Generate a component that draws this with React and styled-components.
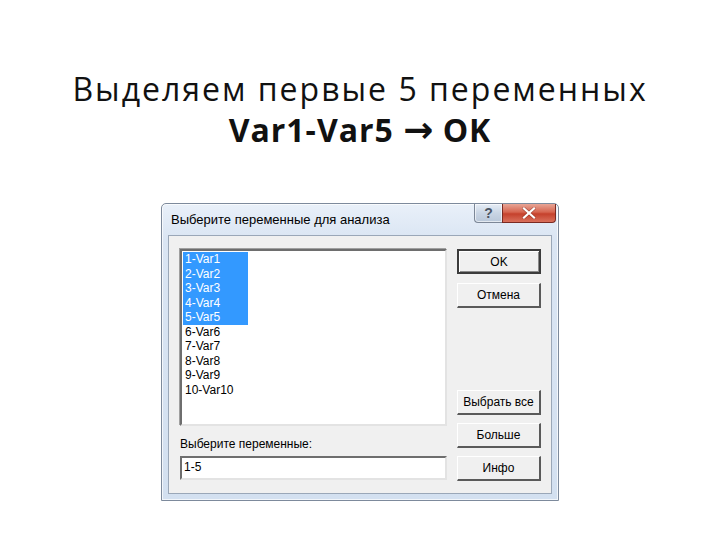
import styled, { createGlobalStyle } from 'styled-components';

const Global = createGlobalStyle`
  html, body {
    margin: 0;
    padding: 0;
    background: #ffffff;
  }
`;

const items = ['1-Var1', '2-Var2', '3-Var3', '4-Var4', '5-Var5', '6-Var6', '7-Var7', '8-Var8', '9-Var9', '10-Var10'];

const App = () => (
  <Slide>
    <Global />
    <Heading>
      <Line>Выделяем первые 5 переменных</Line>
      <Line bold>Var1-Var5 <Arrow>→</Arrow> OK</Line>
    </Heading>

    <Window>
      <TitleBar>
        <Caption>Выберите переменные для анализа</Caption>
        <CaptionButtons>
          <HelpButton>?</HelpButton>
          <CloseButton>
            <svg width="14" height="12" viewBox="0 0 14 12">
              <path d="M2 1.5 L12 10.5 M12 1.5 L2 10.5" stroke="#6b1a12" strokeWidth="3.4" strokeLinecap="square" opacity="0.45" />
              <path d="M2 1.5 L12 10.5 M12 1.5 L2 10.5" stroke="#ffffff" strokeWidth="2.2" strokeLinecap="square" />
            </svg>
          </CloseButton>
        </CaptionButtons>
      </TitleBar>

      <Client>
        <LeftColumn>
          <ListBox>
            {items.map((name, i) => (
              <Item key={name} selected={i < 5}>{name}</Item>
            ))}
          </ListBox>
          <Label>Выберите переменные:</Label>
          <TextBox>1-5</TextBox>
        </LeftColumn>

        <ButtonColumn>
          <Button primary>OK</Button>
          <Button>Отмена</Button>
          <Spacer />
          <Button>Выбрать все</Button>
          <Button>Больше</Button>
          <Button>Инфо</Button>
        </ButtonColumn>
      </Client>
    </Window>
  </Slide>
);

export default App;

const Slide = styled.div`
  width: 720px;
  height: 540px;
  display: flex;
  flex-direction: column;
  align-items: center;
  background: #ffffff;
  overflow: hidden;
`;

const Heading = styled.div`
  margin-top: 68px;
  display: flex;
  flex-direction: column;
  align-items: center;
  font-family: "Open Sans", "Noto Sans", sans-serif;
  color: #111;
`;

const Line = styled.div`
  height: 41px;
  font-size: 32px;
  line-height: 41px;
  letter-spacing: ${p => (p.bold ? '1px' : '2px')};
  font-weight: ${p => (p.bold ? 700 : 400)};
  white-space: nowrap;
`;

const Arrow = styled.span`
  display: inline-block;
  font-family: "DejaVu Sans", sans-serif;
  font-weight: 700;
  font-size: 36px;
  line-height: 30px;
  letter-spacing: 0;
`;

const Window = styled.div`
  margin-top: 53px;
  width: 398px;
  height: 298px;
  box-sizing: border-box;
  border: 1px solid #7d8a9c;
  border-radius: 5px 5px 0 0;
  background: linear-gradient(180deg, #e9f0f9 0%, #dae5f3 12%, #d3e0f0 100%);
  box-shadow: inset 0 0 0 1px rgba(255, 255, 255, 0.7);
  display: flex;
  flex-direction: column;
  padding: 0 6px 6px 6px;
  font-family: "Liberation Sans", Arial, sans-serif;
`;

const TitleBar = styled.div`
  height: 31px;
  display: flex;
  align-items: flex-start;
  justify-content: space-between;
`;

const Caption = styled.div`
  padding: 8px 0 0 3px;
  font-size: 13px;
  color: #000;
  white-space: nowrap;
`;

const CaptionButtons = styled.div`
  display: flex;
  margin-right: -4px;
`;

const HelpButton = styled.div`
  width: 28px;
  height: 19px;
  box-sizing: border-box;
  border: 1px solid #7c8797;
  border-top: none;
  border-right: none;
  border-radius: 0 0 0 4px;
  background: linear-gradient(180deg, #e6edf6 0%, #c9d5e4 50%, #b9c7d9 100%);
  box-shadow: inset 0 0 0 1px rgba(255, 255, 255, 0.6);
  display: flex;
  align-items: center;
  justify-content: center;
  font-size: 14px;
  font-weight: 700;
  color: #4b5563;
`;

const CloseButton = styled.div`
  width: 54px;
  height: 19px;
  box-sizing: border-box;
  border: 1px solid #7a2a22;
  border-top: none;
  border-radius: 0 0 4px 0;
  background: linear-gradient(180deg, #e8a596 0%, #d66550 45%, #c5412c 55%, #d9705c 100%);
  display: flex;
  align-items: center;
  justify-content: center;
`;

const Client = styled.div`
  flex: 1;
  box-sizing: border-box;
  border: 1px solid #9aa7b8;
  background: #f0f0f0;
  display: grid;
  grid-template-columns: 267px 84px;
  column-gap: 10px;
  padding: 13px 10px 12px 11px;
`;

const LeftColumn = styled.div`
  display: flex;
  flex-direction: column;
`;

const ListBox = styled.div`
  height: 177px;
  box-sizing: border-box;
  background: #ffffff;
  border-top: 2px solid #6e6e6e;
  border-left: 2px solid #6e6e6e;
  border-right: 2px solid #e3e3e3;
  border-bottom: 2px solid #e3e3e3;
  box-shadow: -1px -1px 0 #a0a0a0;
  padding: 1px 0 0 1px;
  display: flex;
  flex-direction: column;
  font-size: 12px;
`;

const Item = styled.div`
  width: 65px;
  height: 14.5px;
  line-height: 14.5px;
  padding-left: 2px;
  box-sizing: border-box;
  white-space: nowrap;
  background: ${p => (p.selected ? '#3399ff' : 'transparent')};
  color: ${p => (p.selected ? '#ffffff' : '#000000')};
`;

const Label = styled.div`
  margin-top: 11px;
  font-size: 12px;
  color: #000;
  line-height: 14px;
`;

const TextBox = styled.div`
  margin-top: 5px;
  height: 24px;
  box-sizing: border-box;
  background: #ffffff;
  border-top: 2px solid #6e6e6e;
  border-left: 2px solid #6e6e6e;
  border-right: 2px solid #e3e3e3;
  border-bottom: 2px solid #e3e3e3;
  padding: 2px 0 0 2px;
  font-size: 12px;
  color: #000;
`;

const ButtonColumn = styled.div`
  display: flex;
  flex-direction: column;
  gap: 8px;
`;

const Spacer = styled.div`
  flex: 1;
`;

const Button = styled.div`
  height: 25px;
  box-sizing: border-box;
  background: #f0f0f0;
  display: flex;
  align-items: center;
  justify-content: center;
  font-size: 12px;
  color: #000;
  border-top: 1px solid #ffffff;
  border-left: 1px solid #ffffff;
  border-right: 2px solid #5a5a5a;
  border-bottom: 2px solid #5a5a5a;
  ${p => p.primary && `
    border: 2px solid #3c3c3c;
    box-shadow: inset 1px 1px 0 #ffffff, inset -1px -1px 0 #8a8a8a;
  `}
  &:first-child + & {
    margin-top: 1px;
  }
`;
